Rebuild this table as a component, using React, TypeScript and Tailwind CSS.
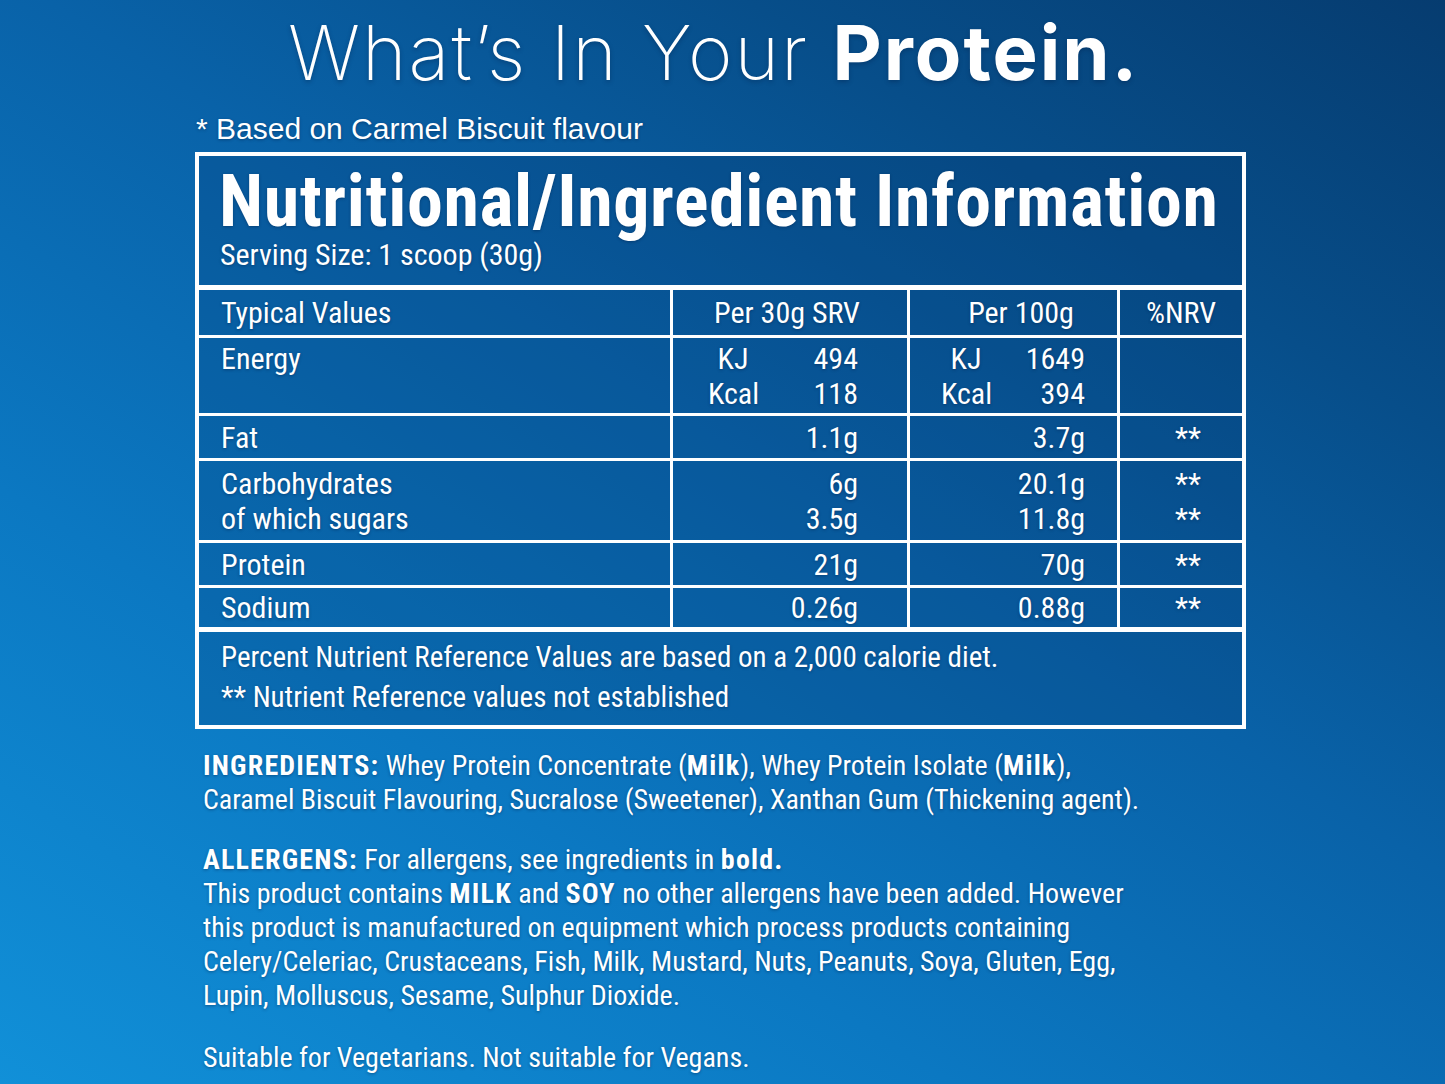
import React from 'react';

const NARROW = "font-['Liberation_Sans_Narrow','Roboto_Condensed','DejaVu_Sans_Condensed','Liberation_Sans',sans-serif]";
const SHADOW = '[text-shadow:0_1px_3px_rgba(0,30,70,0.45)]';

type Row = {
  label: string[];
  srv: string[];
  per100: string[];
  nrv: string[];
  h: string;
};

const ROWS: Row[] = [
  { label: ['Fat'], srv: ['1.1g'], per100: ['3.7g'], nrv: ['**'], h: 'h-[45px]' },
  { label: ['Carbohydrates', 'of which sugars'], srv: ['6g', '3.5g'], per100: ['20.1g', '11.8g'], nrv: ['**', '**'], h: 'h-[82px]' },
  { label: ['Protein'], srv: ['21g'], per100: ['70g'], nrv: ['**'], h: 'h-[45px]' },
];

function Lines({ items }: { items: string[] }) {
  return (
    <div className="flex flex-col">
      {items.map((t, i) => (
        <span key={i}>{t}</span>
      ))}
    </div>
  );
}

// KJ / Kcal pair, label centred in its own slot, value flush right
function EnergyCell({ pad, kj, kcal }: { pad: string; kj: string; kcal: string }) {
  return (
    <div className={`flex w-full flex-col ${pad}`}>
      <div className="flex justify-between">
        <span className="w-[50px] text-center">KJ</span>
        <span>{kj}</span>
      </div>
      <div className="flex justify-between">
        <span className="w-[50px] text-center">Kcal</span>
        <span>{kcal}</span>
      </div>
    </div>
  );
}

function B({ children }: { children: React.ReactNode }) {
  return <b className="tracking-[1.2px]">{children}</b>;
}

export default function App() {
  const cell = 'flex items-center border-white';
  return (
    <div className="min-h-[1084px] w-full overflow-hidden bg-[linear-gradient(32deg,#1190d8_0%,#0b78c2_30%,#0962a8_56%,#074e8a_78%,#063c70_100%)] text-white">
      <div className="pl-[195px]">
        {/* Heading */}
        <h1 className="w-[1051px] pt-[14px] pr-[14px] text-center text-[76px] leading-[76px] tracking-[2px] font-['Inter','Lato',sans-serif] [text-shadow:0_2px_4px_rgba(0,30,70,0.35)]">
          <span className="font-extralight">What’s In Your </span>
          <span className="font-bold">Protein.</span>
        </h1>
        <p className={`mt-[22px] pl-[1px] text-[30px] leading-[34px] font-['Liberation_Sans',sans-serif] ${SHADOW}`}>
          * Based on Carmel Biscuit flavour
        </p>

        {/* Table */}
        <div className={`mt-[6px] w-[1051px] border-[4px] border-white bg-[rgba(4,55,110,0.22)] ${NARROW} ${SHADOW}`}>
          <div className="border-b-[5px] border-white pl-[20px] pt-[8px] pb-[15px]">
            <div className="text-[72px] leading-[76px] font-bold tracking-[0.6px]">Nutritional/Ingredient Information</div>
            <div className="pl-[1px] text-[30px] leading-[30px]">Serving Size: 1 scoop (30g)</div>
          </div>

          <div className="grid grid-cols-[474px_237px_210px_1fr] text-[30px] leading-[35px]">
            {/* header row */}
            <div className={`${cell} h-[48px] border-r-[3px] border-b-[3px] pl-[22px]`}>Typical Values</div>
            <div className={`${cell} h-[48px] border-r-[3px] border-b-[3px] justify-center pr-[6px]`}>Per 30g SRV</div>
            <div className={`${cell} h-[48px] border-r-[3px] border-b-[3px] justify-center pl-[15px]`}>Per 100g</div>
            <div className={`${cell} h-[48px] border-b-[3px] justify-center`}>%NRV</div>

            {/* energy */}
            <div className={`${cell} h-[78px] border-r-[3px] border-b-[3px] items-start pt-[3px] pl-[22px]`}>Energy</div>
            <div className={`${cell} h-[78px] border-r-[3px] border-b-[3px]`}>
              <EnergyCell pad="pl-[35px] pr-[49px]" kj="494" kcal="118" />
            </div>
            <div className={`${cell} h-[78px] border-r-[3px] border-b-[3px]`}>
              <EnergyCell pad="pl-[31px] pr-[32px]" kj="1649" kcal="394" />
            </div>
            <div className={`${cell} h-[78px] border-b-[3px]`} />

            {ROWS.map((r) => (
              <React.Fragment key={r.label[0]}>
                <div className={`${cell} ${r.h} border-r-[3px] border-b-[3px] pl-[22px]`}>
                  <Lines items={r.label} />
                </div>
                <div className={`${cell} ${r.h} border-r-[3px] border-b-[3px] justify-end pr-[49px] text-right`}>
                  <Lines items={r.srv} />
                </div>
                <div className={`${cell} ${r.h} border-r-[3px] border-b-[3px] justify-end pr-[32px] text-right`}>
                  <Lines items={r.per100} />
                </div>
                <div className={`${cell} ${r.h} border-b-[3px] justify-center pl-[14px]`}>
                  <Lines items={r.nrv} />
                </div>
              </React.Fragment>
            ))}

            {/* sodium */}
            <div className={`${cell} h-[39px] border-r-[3px] pl-[22px]`}>Sodium</div>
            <div className={`${cell} h-[39px] border-r-[3px] justify-end pr-[49px]`}>0.26g</div>
            <div className={`${cell} h-[39px] border-r-[3px] justify-end pr-[32px]`}>0.88g</div>
            <div className={`${cell} h-[39px] justify-center pl-[14px]`}>**</div>
          </div>

          <div className="border-t-[5px] border-white pl-[22px] pt-[5px] pb-[8px] text-[29px] leading-[40px]">
            <p>Percent Nutrient Reference Values are based on a 2,000 calorie diet.</p>
            <p>** Nutrient Reference values not established</p>
          </div>
        </div>

        {/* Ingredients & allergens */}
        <div className={`w-[1000px] pl-[8px] text-[28px] leading-[34px] ${NARROW} ${SHADOW}`}>
          <p className="mt-[20px]">
            <B>INGREDIENTS:</B> Whey Protein Concentrate (<B>Milk</B>), Whey Protein Isolate (<B>Milk</B>),
            <br />
            Caramel Biscuit Flavouring, Sucralose (Sweetener), Xanthan Gum (Thickening agent).
          </p>
          <p className="mt-[26px]">
            <B>ALLERGENS:</B> For allergens, see ingredients in <B>bold.</B>
            <br />
            This product contains <B>MILK</B> and <B>SOY</B> no other allergens have been added. However
            <br />
            this product is manufactured on equipment which process products containing
            <br />
            Celery/Celeriac, Crustaceans, Fish, Milk, Mustard, Nuts, Peanuts, Soya, Gluten, Egg,
            <br />
            Lupin, Molluscus, Sesame, Sulphur Dioxide.
          </p>
          <p className="mt-[28px] pb-[6px]">Suitable for Vegetarians. Not suitable for Vegans.</p>
        </div>
      </div>
    </div>
  );
}
